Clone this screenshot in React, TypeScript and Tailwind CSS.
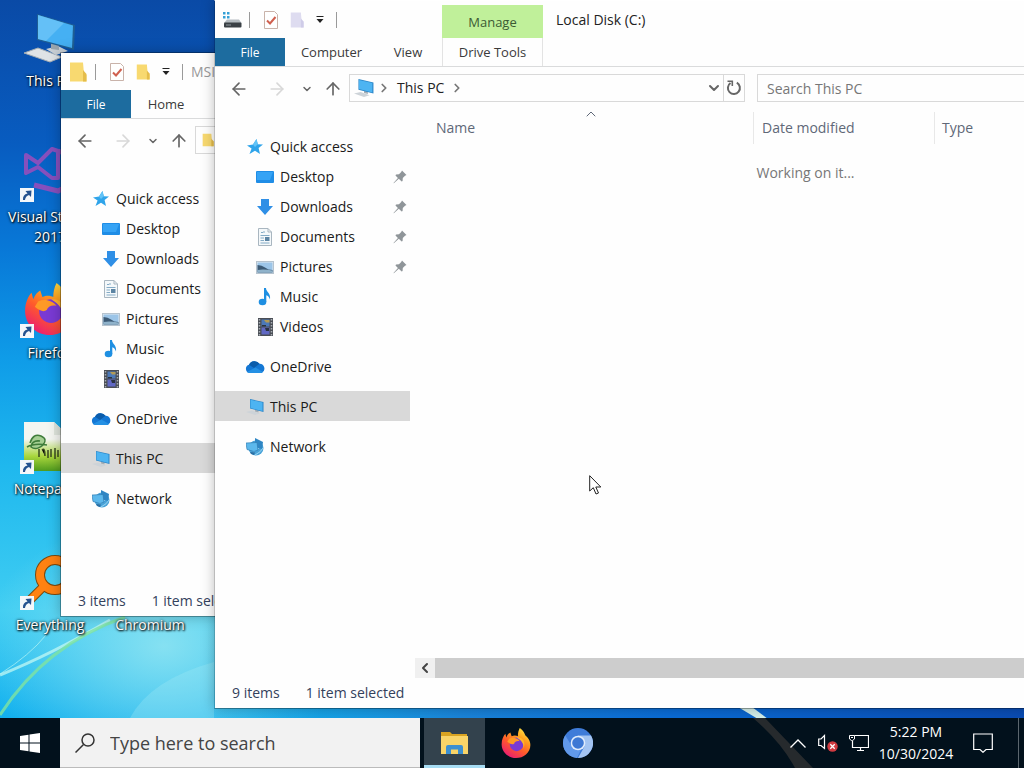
import type { ReactNode } from "react";
import { ArrowLeft, ArrowRight, ArrowUp, ChevronDown, ChevronLeft, ChevronRight, ChevronUp } from "lucide-react";

function ComputerIcon({ className }: { className?: string }) {
  return (
    <svg viewBox="0 0 52 50" className={className} aria-hidden="true">
      <path d="M0 40 L14 35 L38 44 L26 49 Z" fill="#dfe3e6" stroke="#a3acb3" strokeWidth="1" />
      <path d="M22 36 L34 33 L44 38 L32 42 Z" fill="#c9d0d6" />
      <path d="M27 28 L35 30 L35 37 L27 36 Z" fill="#9aa5ad" />
      <path d="M13 1 L51 12 L50 37 L13 27 Z" fill="#1f5f94" />
      <path d="M14 2 L49 12.500 L48 35 L14 26 Z" fill="#45b0f3" />
      <path d="M14 2 L40 10 L22 28 L14 26 Z" fill="#7accfa" opacity="0.600" />
    </svg>
  );
}

function SmallComputerIcon({ className }: { className?: string }) {
  return (
    <svg viewBox="0 0 18 16" className={className} aria-hidden="true">
      <path d="M0 13 L6 11.500 L14 14.500 L9 16 Z" fill="#cdd3d8" />
      <path d="M9 10 L12.500 11 V13.500 L9 12.500 Z" fill="#a5aeb5" />
      <path d="M4 0 L17.500 3 V13 L4 9.500 Z" fill="#2c86c8" />
      <path d="M4.500 0.800 L16.500 3.500 V12 L4.500 9 Z" fill="#4db4f2" />
    </svg>
  );
}

function StarIcon() {
  return (
    <svg viewBox="0 0 16 16" className="size-4" aria-hidden="true">
      <path d="M9.500 0 L10.800 5.200 L16 5.600 L11.600 9 L13 15 L8 11.800 L2.500 15 L4.600 9.400 L0 6.400 L6 5.600 Z" fill="#2fa4ea" />
      <path d="M9.500 0 L10.800 5.200 L8 8 L6 5.600 Z" fill="#62c3f7" />
    </svg>
  );
}

function DesktopIcon() {
  return (
    <svg viewBox="0 0 18 16" className="h-4 w-[18px]" aria-hidden="true">
      <rect x="0" y="2" width="18" height="12" rx="1" fill="#1f8de6" />
      <path d="M1 3 H17 L14 11 H1 Z" fill="#35a3f5" />
    </svg>
  );
}

function DownloadIcon() {
  return (
    <svg viewBox="0 0 18 16" className="h-4 w-[18px]" aria-hidden="true">
      <path d="M5 0 H13 V7 H17 L9 16 L1 7 H5 Z" fill="#2f8fe6" />
    </svg>
  );
}

function DocumentIcon() {
  return (
    <svg viewBox="0 0 18 18" className="size-[18px]" aria-hidden="true">
      <path d="M2.500 0.500 H12 L15.500 4 V17.500 H2.500 Z" fill="#f4f8fa" stroke="#a9b6c0" />
      <path d="M12 0.500 V4 H15.500" fill="none" stroke="#a9b6c0" />
      <path d="M5 4.500 H7 M8 3 V5 M4.500 7.500 H13.500 M4.500 10 H8 M4.500 12.500 H8 M4.500 15 H13.500" stroke="#84abc6" />
      <rect x="9" y="9" width="4.500" height="4" fill="#5c84a3" />
    </svg>
  );
}

function PictureIcon() {
  return (
    <svg viewBox="0 0 18 16" className="h-4 w-[18px]" aria-hidden="true">
      <rect x="0.500" y="2.500" width="17" height="12" fill="#e1e9f0" stroke="#b6c3ce" />
      <rect x="1.500" y="3.500" width="15" height="10" fill="#9cc5e8" />
      <path d="M1.500 6 Q6 6 9 8.500 T16.500 11 V13.500 H1.500 Z" fill="#3c5a75" />
      <path d="M1.500 11 Q8 10 16.500 11.500 V13.500 H1.500 Z" fill="#8fb2ca" />
    </svg>
  );
}

function MusicIcon() {
  return (
    <svg viewBox="0 0 18 18" className="size-[18px]" aria-hidden="true">
      <ellipse cx="6.500" cy="14" rx="3.800" ry="3.300" fill="#1e8fe2" />
      <path d="M8 0 H10 C10 4 15 5 14 11.500 C13 8.500 12 7.500 10.300 7.200 V14 H8 Z" fill="#1e8fe2" />
    </svg>
  );
}

function VideoIcon() {
  return (
    <svg viewBox="0 0 18 18" className="size-[18px]" aria-hidden="true">
      <rect x="2" y="0" width="15" height="18" fill="#4a4e55" />
      <path d="M3.500 1 V18 M15.500 1 V18" stroke="#a8adb4" strokeWidth="1.500" strokeDasharray="1.500 1.500" />
      <rect x="5.500" y="1.500" width="8" height="7" fill="#4c79b8" />
      <rect x="5.500" y="9.500" width="8" height="7" fill="#6068c4" />
      <path d="M8 2 H13.500 V4.500 H10 Z" fill="#b39b55" />
      <path d="M6 7 H10 V8.500 H6 Z M9 10 H13 V13 H10 Z" fill="#2a3240" />
    </svg>
  );
}

function CloudIcon() {
  return (
    <svg viewBox="0 0 20 14" className="h-[14px] w-5 shrink-0" aria-hidden="true">
      <path d="M4.500 13 A4.200 4.200 0 0 1 4 4.800 A6 6 0 0 1 14.500 3.800 A4.800 4.800 0 0 1 16.500 13 Z" fill="#1477d4" />
      <path d="M4 4.800 A6 6 0 0 1 14.500 3.800 L9 8 Z" fill="#0b5cab" />
      <path d="M2 12 L10.500 7.500 L18 12 Q17 13 16 13 H4.500 Q3 13 2 12 Z" fill="#2490e4" />
    </svg>
  );
}

function NetworkIcon() {
  return (
    <svg viewBox="0 0 18 18" className="size-[18px]" aria-hidden="true">
      <circle cx="10" cy="10" r="7.500" fill="#4aa3d8" />
      <path d="M7 14 Q12 12 16 7 M9 17 Q15 14 17 10" stroke="#9ad6f4" fill="none" />
      <path d="M9 0 L17 4 L16 11 L9 9 Z" fill="#2f86c4" />
      <path d="M0 5 L11 4.500 L12 12 L8 13.500 L1 11.500 Z" fill="#5cb8ec" stroke="#2f7db3" strokeWidth="0.700" />
      <path d="M4 14 L9 14.500 L8 17 L5 16 Z" fill="#2b6fa3" />
    </svg>
  );
}

function PinIcon() {
  return (
    <svg viewBox="0 0 14 14" className="size-[14px]" aria-hidden="true">
      <path d="M9 0.500 L13.500 5 L12 5.800 L9.800 8 L9.600 11 L8.600 11.500 L5.800 8.800 L0.800 13.200 L0.500 12.900 L4.900 8 L2.500 5.400 L3 4.400 L6 4.200 L8.200 2 Z" fill="#8f9599" />
    </svg>
  );
}

function FolderIcon({ className, faded }: { className?: string; faded?: boolean }) {
  return (
    <svg viewBox="0 0 18 20" className={className} aria-hidden="true">
      <path d="M1 0.500 H14 L15 12 L17.500 13 V19.500 H1 Z" fill={faded ? "#dedcf0" : "#f8d970"} />
      <path d="M14 8 L17.500 12 V19.500 H14 Z" fill={faded ? "#cfcce8" : "#e5bd4b"} />
    </svg>
  );
}

function DriveIcon() {
  return (
    <svg viewBox="0 0 20 18" className="h-[18px] w-5" aria-hidden="true">
      <path d="M1 1 H3.500 V3.500 H1 Z M5 1 H7.500 V3.500 H5 Z M1 5 H3.500 V7.500 H1 Z M5 5 H7.500 V7.500 H5 Z" fill="#35a0d6" />
      <path d="M5 8.500 H17 L19.500 12 H2 Z" fill="#b5bcc1" />
      <rect x="2" y="11.500" width="17.500" height="5" rx="1" fill="#3a4045" />
      <path d="M4 14 H9" stroke="#8d969c" />
    </svg>
  );
}

function ChecklistIcon() {
  return (
    <svg viewBox="0 0 14 18" className="h-[18px] w-[14px]" aria-hidden="true">
      <path d="M0.500 0.500 H10.500 L13.500 3.500 V17.500 H0.500 Z" fill="#fff" stroke="#c9b3aa" />
      <path d="M3 9.500 L6 12.500 L11.500 6" fill="none" stroke="#d0604f" strokeWidth="2" />
    </svg>
  );
}

function RefreshIcon() {
  return (
    <svg viewBox="0 0 16 16" className="size-4" aria-hidden="true">
      <path d="M4.500 3 A6 6 0 1 0 10.800 2.700" fill="none" stroke="#666" strokeWidth="2" />
      <path d="M1.500 1.200 H6.300 V6" fill="none" stroke="#666" strokeWidth="1.600" />
    </svg>
  );
}

function FirefoxIcon({ className, id }: { className?: string; id: string }) {
  return (
    <svg viewBox="0 0 48 48" className={className} aria-hidden="true">
      <defs>
        <linearGradient id={id} x1="0.850" y1="0" x2="0.200" y2="1">
          <stop offset="0" stopColor="#fff14a" />
          <stop offset="0.300" stopColor="#ffa21f" />
          <stop offset="0.600" stopColor="#ff5a2b" />
          <stop offset="1" stopColor="#e8157a" />
        </linearGradient>
      </defs>
      <path d="M30 0 C36 4 38 9 39 12 C42 14 47 20 47 27 C47 39 36 48 24 48 C11 48 1 38 1 26 C1 18 4 12 7 9 L8.500 15 C10 11 13 8 15 7 L17 13 C21 11 25 12 27 13 C27 8 28 4 30 0 Z" fill={`url(#${id})`} />
      <circle cx="25" cy="26" r="11" fill="#7a3ad4" />
      <path d="M13 17 C20 14 27 17 30 21 C25 20 22 22 21 25 C18 27 15 26 10 22 Z" fill="#ff9a26" />
      <path d="M25 15 C36 14 40 24 36 33 C37 25 33 20 25 15 Z" fill="#ffb52b" />
    </svg>
  );
}

function ChromiumIcon({ className }: { className?: string }) {
  return (
    <svg viewBox="0 0 30 30" className={className} aria-hidden="true">
      <circle cx="15" cy="15" r="15" fill="#3f7cd9" />
      <path d="M15 7.500 H28 A15 15 0 0 1 15 30 L21.500 18.500 Z" fill="#a3c4f2" />
      <path d="M2.200 7.200 L9 18.500 Q13 23 18 21.500 L14 30 A15 15 0 0 1 2.200 7.200 Z" fill="#6199ea" />
      <circle cx="15" cy="15" r="7.300" fill="#e2edfc" />
      <circle cx="15" cy="15" r="5.800" fill="#3d78d4" />
    </svg>
  );
}

function VisualStudioIcon() {
  return (
    <svg viewBox="0 0 52 52" className="size-[52px]" aria-hidden="true">
      <path d="M2 8 L14 16 L28 2 L34 4 V31 L28 31 L14 20 L2 26 Z" fill="none" stroke="#8650bd" strokeWidth="4" strokeLinejoin="round" />
      <path d="M10 38 L34 44 L46 38 V8 L34 4" fill="none" stroke="#8650bd" strokeWidth="5" />
    </svg>
  );
}

function NotepadIcon() {
  return (
    <svg viewBox="0 0 52 50" className="h-[50px] w-[52px]" aria-hidden="true">
      <defs>
        <linearGradient id="npp" x1="0" y1="0" x2="0" y2="1">
          <stop offset="0.350" stopColor="#f4f6f1" />
          <stop offset="0.700" stopColor="#a9d63c" />
          <stop offset="1" stopColor="#4f9a1e" />
        </linearGradient>
      </defs>
      <path d="M0 1 H30 L44 14 V50 H0 Z" fill="url(#npp)" />
      <path d="M30 1 V14 H44 Z" fill="#dfe5dc" />
      <path d="M7 21 Q10 13 17 15 Q23 19 19 25 Q12 30 7 26 Z" fill="#a5cf93" />
      <path d="M3 26 Q10 22 23 24 M6 22 Q9 12 17 15 Q24 18 19 24 Q12 30 7 26 Q8 19 16 20" fill="none" stroke="#3f7d3a" strokeWidth="1.500" />
      <path d="M15 28 V36 M18 29 Q21 26 21 35 M24 29 V37 M27 28 V36 M31 27 V38 M34 29 V36 M38 28 V37" stroke="#3a4a20" strokeWidth="1.500" />
    </svg>
  );
}

function EverythingIcon() {
  return (
    <svg viewBox="0 0 52 52" className="size-[52px]" aria-hidden="true">
      <circle cx="31" cy="20" r="15" fill="none" stroke="#7a4a10" strokeWidth="10" />
      <path d="M20 31 L6 45" stroke="#7a4a10" strokeWidth="9" />
      <circle cx="31" cy="20" r="15" fill="none" stroke="#ff8212" strokeWidth="8" />
      <path d="M21 30 L6 45" stroke="#ff8212" strokeWidth="7" />
    </svg>
  );
}

function Wallpaper() {
  return (
    <svg viewBox="0 0 1024 718" preserveAspectRatio="none" className="absolute inset-0 size-full" aria-hidden="true">
      <defs>
        <linearGradient id="sky" x1="0" y1="0" x2="0" y2="1">
          <stop offset="0" stopColor="#0a4aa6" />
          <stop offset="0.200" stopColor="#085cc0" />
          <stop offset="0.350" stopColor="#0879d8" />
          <stop offset="0.500" stopColor="#0f9ce8" />
          <stop offset="0.650" stopColor="#1fb8ee" />
          <stop offset="0.850" stopColor="#3fcdf2" />
          <stop offset="1" stopColor="#12b0ee" />
        </linearGradient>
        <radialGradient id="glow" cx="0.160" cy="0.900" r="0.180">
          <stop offset="0" stopColor="#8fe4f2" stopOpacity="0.900" />
          <stop offset="1" stopColor="#8fe4f2" stopOpacity="0" />
        </radialGradient>
        <linearGradient id="side" x1="0" y1="0" x2="1" y2="0">
          <stop offset="0.200" stopColor="#1a9be0" stopOpacity="0" />
          <stop offset="0.450" stopColor="#1a84da" />
          <stop offset="0.650" stopColor="#0a6cd6" />
          <stop offset="1" stopColor="#0a4cb4" />
        </linearGradient>
      </defs>
      <rect width="1024" height="718" fill="url(#sky)" />
      <rect width="1024" height="718" fill="url(#glow)" />
      <rect y="600" width="1024" height="118" fill="url(#side)" />
      <path d="M0 675 Q50 655 110 620" fill="none" stroke="#c9fbf4" strokeWidth="3" opacity="0.700" />
      <path d="M0 674 Q30 655 46 635" fill="none" stroke="#c9fbf4" strokeWidth="1" opacity="0.600" />
      <path d="M0 715 Q45 645 125 617" fill="none" stroke="#7fe3a0" strokeWidth="3" opacity="0.800" />
      <path d="M130 718 Q150 680 214 662 V718 Z" fill="#a6ecf6" opacity="0.300" />
      <path d="M738 707 H752 L768 719 H758 Z" fill="#d5f0ea" />
    </svg>
  );
}

function ShortcutArrow() {
  return (
    <svg viewBox="0 0 14 14" className="absolute bottom-[-3px] left-[-4px] size-[14px]" aria-hidden="true">
      <rect width="14" height="14" fill="#f4f7fa" />
      <path d="M3 12 Q2.500 6.500 7.500 5.500 L5.500 3 L11.500 2.500 L11 9 L9 7 Q5.500 8 5 12 Z" fill="#24528f" />
    </svg>
  );
}

function Shortcut({ label, icon, shortcut = true, className = "" }: { label: string; icon: ReactNode; shortcut?: boolean; className?: string }) {
  return (
    <button type="button" className={`flex w-[100px] flex-col items-center text-white ${className}`}>
      <span className="relative mb-2 flex h-[52px] w-[52px] items-end justify-center">
        {icon}
        {shortcut && <ShortcutArrow />}
      </span>
      <span className="px-1 text-sm leading-5 [text-shadow:1px_1px_2px_#000,0_0_3px_#000]">{label}</span>
    </button>
  );
}

const quickAccess = [
  { label: "Desktop", icon: <DesktopIcon />, pinned: true },
  { label: "Downloads", icon: <DownloadIcon />, pinned: true },
  { label: "Documents", icon: <DocumentIcon />, pinned: true },
  { label: "Pictures", icon: <PictureIcon />, pinned: true },
  { label: "Music", icon: <MusicIcon />, pinned: false },
  { label: "Videos", icon: <VideoIcon />, pinned: false },
];

function NavItem({ label, icon, nested, pinned, selected }: { label: string; icon: ReactNode; nested?: boolean; pinned?: boolean; selected?: boolean }) {
  return (
    <button
      type="button"
      className={`flex h-[30px] w-full items-center pt-0.5 pr-[3px] text-left ${nested ? "pl-[40px]" : "pl-[30px]"} ${selected ? "bg-[#d9d9d9]" : ""}`}
    >
      <span className="mr-[5px] flex w-5 shrink-0 items-center justify-center">{icon}</span>
      <span className="flex-1">{label}</span>
      {pinned && <PinIcon />}
    </button>
  );
}

function Sidebar() {
  return (
    <nav className="flex w-[195px] shrink-0 flex-col pt-[22px] text-[#1a1a1a]">
      <NavItem label="Quick access" icon={<StarIcon />} />
      {quickAccess.map((item) => (
        <NavItem key={item.label} nested {...item} />
      ))}
      <div className="mt-[10px] flex flex-col gap-[10px]">
        <NavItem label="OneDrive" icon={<CloudIcon />} />
        <NavItem label="This PC" icon={<SmallComputerIcon className="h-4 w-[18px]" />} selected />
        <NavItem label="Network" icon={<NetworkIcon />} />
      </div>
    </nav>
  );
}

function QuickToolbar({ icon, faded }: { icon: ReactNode; faded?: boolean }) {
  return (
    <div className="flex h-full items-center">
      <span className="flex w-[34px] items-center justify-center">{icon}</span>
      <span className="h-4 w-px bg-[#9a9a9a]" />
      <button type="button" aria-label="Properties" className="ml-[14px]">
        <ChecklistIcon />
      </button>
      <button type="button" aria-label="New folder" className="ml-3">
        <FolderIcon className="h-4 w-[14px]" faded={faded} />
      </button>
      <button type="button" aria-label="Customize toolbar" className="ml-3">
        <svg viewBox="0 0 8 8" className="size-2" aria-hidden="true">
          <path d="M0.500 0.500 H7.500" stroke="#222" />
          <path d="M0.500 3 H7.500 L4 7 Z" fill="#222" />
        </svg>
      </button>
      <span className="ml-3 h-4 w-px bg-[#9a9a9a]" />
    </div>
  );
}

function NavButtons() {
  return (
    <div className="flex shrink-0 items-center pt-0.5 pl-[14px] text-[#666]">
      <button type="button" aria-label="Back" className="w-5">
        <ArrowLeft size={20} strokeWidth={2} />
      </button>
      <button type="button" aria-label="Forward" className="ml-[18px] w-5 text-[#d8d8d8]">
        <ArrowRight size={20} strokeWidth={2} />
      </button>
      <button type="button" aria-label="Recent locations" className="ml-[14px] w-3">
        <ChevronDown size={12} strokeWidth={3} />
      </button>
      <button type="button" aria-label="Up" className="ml-[10px] w-5">
        <ArrowUp size={20} strokeWidth={2} />
      </button>
    </div>
  );
}

function Window({ className, toolbar, title, contextTab, tabs, address, children, status }: {
  className: string;
  toolbar: ReactNode;
  title: ReactNode;
  contextTab?: boolean;
  tabs: ReactNode;
  address: ReactNode;
  children?: ReactNode;
  status: string[];
}) {
  return (
    <section className={`absolute flex flex-col overflow-hidden border bg-[#fefefe] bg-clip-padding text-sm shadow-[0_0_12px_rgba(0,0,0,0.25)] ${className}`}>
      <header className="flex h-[37px] shrink-0 items-center">
        <div className={contextTab ? "h-full w-[227px]" : "h-full"}>{toolbar}</div>
        {contextTab && (
          <div className="flex h-[33px] w-[101px] items-center justify-center self-end bg-[#c0f09a] pt-0.5 text-[13px] text-[#3c5a34]">Manage</div>
        )}
        {title}
      </header>
      <div className="flex h-[29px] shrink-0 border-b border-[#dadbdc] text-[13px] text-[#3a3a3a]">
        <button type="button" className="w-[70px] bg-[#1d6c9f] pt-px text-xs text-white">File</button>
        {tabs}
      </div>
      <div className="flex h-[42px] shrink-0 items-center">
        <NavButtons />
        {address}
      </div>
      <div className="flex min-h-0 flex-1">
        <Sidebar />
        {children}
      </div>
      <footer className="flex h-[30px] shrink-0 items-center gap-[26px] pl-[17px] text-[#33415c]">
        {status.map((text) => (
          <span key={text}>{text}</span>
        ))}
      </footer>
    </section>
  );
}

function BackWindow() {
  return (
    <Window
      className="top-[52px] left-[60px] h-[565px] w-[640px] border-black/30"
      toolbar={<QuickToolbar icon={<FolderIcon className="h-5 w-[18px]" />} />}
      title={<h2 className="pl-2 text-[#999]">MSI</h2>}
      tabs={<button type="button" className="w-[70px]">Home</button>}
      address={
        <div className="mr-3 ml-1.5 flex h-7 flex-1 items-center border border-[#d9d9d9] pl-1.5">
          <FolderIcon className="h-4 w-3" />
        </div>
      }
      status={["3 items", "1 item selected"]}
    />
  );
}

function FrontWindow() {
  return (
    <Window
      className="top-0 right-[-173px] bottom-[9px] left-[214px] border-x-black/15 border-t-white border-b-black/30"
      toolbar={<QuickToolbar icon={<DriveIcon />} faded />}
      title={<h1 className="pl-[13px] text-[#222]">Local Disk (C:)</h1>}
      contextTab
      tabs={
        <>
          <button type="button" className="w-[93px]">Computer</button>
          <button type="button" className="w-[60px]">View</button>
          <button type="button" className="ml-1 w-[101px] border-x border-[#e3e3e3]">Drive Tools</button>
        </>
      }
      address={
        <>
          <div className="ml-1.5 flex h-7 flex-1 items-center border border-[#d9d9d9] text-[#222]">
            <SmallComputerIcon className="ml-1 h-[18px] w-5" />
            <ChevronRight size={14} strokeWidth={3} className="ml-[3px] text-[#777]" />
            <button type="button" className="mr-1.5 ml-1.5">This PC</button>
            <ChevronRight size={14} strokeWidth={3} className="text-[#777]" />
            <button type="button" aria-label="Previous locations" className="mr-px ml-auto text-[#666]">
              <ChevronDown size={16} strokeWidth={3} />
            </button>
            <button type="button" aria-label="Refresh" className="flex h-full w-[21px] items-center justify-center border-l border-[#d9d9d9]">
              <RefreshIcon />
            </button>
          </div>
          <input
            type="search"
            aria-label="Search This PC"
            placeholder="Search This PC"
            className="mr-3 ml-3 h-7 w-[427px] border border-[#d9d9d9] px-[9px] outline-none placeholder:text-[#777]"
          />
        </>
      }
      status={["9 items", "1 item selected"]}
    >
      <div className="ml-[5px] flex min-w-0 flex-1 flex-col">
        <table className="w-full table-fixed text-left text-[#5f6878]">
          <colgroup>
            <col className="w-[339px]" />
            <col className="w-[181px]" />
            <col />
          </colgroup>
          <thead>
            <tr className="h-[38px]">
              <th className="p-0 font-normal">
                <div className="relative flex h-8 items-center border-r border-[#e8e8e8] pl-[21px]">
                  Name
                  <ChevronUp size={16} strokeWidth={1.5} className="absolute top-[-6px] left-[168px]" />
                </div>
              </th>
              <th className="p-0 font-normal">
                <div className="flex h-8 items-center border-r border-[#e8e8e8] pl-2">Date modified</div>
              </th>
              <th className="p-0 font-normal">
                <div className="pl-[7px]">Type</div>
              </th>
            </tr>
          </thead>
          <tbody>
            <tr className="h-[52px]">
              <td colSpan={3} className="p-0 text-center text-[#777]">Working on it...</td>
            </tr>
          </tbody>
        </table>
        <div className="mt-auto flex h-5">
          <button type="button" aria-label="Scroll left" className="flex w-5 items-center justify-center bg-[#f0f0f0] text-[#444]">
            <ChevronLeft size={16} strokeWidth={3} />
          </button>
          <div className="flex-1 bg-[#cdcdcd]" />
        </div>
      </div>
    </Window>
  );
}

function Taskbar() {
  return (
    <footer className="relative flex h-[50px] shrink-0 items-stretch overflow-hidden bg-[#02111c] text-white">
      <button type="button" aria-label="Start" className="flex w-[60px] items-center justify-center">
        <svg viewBox="0 0 20 20" className="size-5" aria-hidden="true">
          <path d="M0 3 L8.500 1.800 V9.500 H0 Z M9.500 1.600 L20 0 V9.500 H9.500 Z M0 10.500 H8.500 V18.200 L0 17 Z M9.500 10.500 H20 V20 L9.500 18.400 Z" fill="#fff" />
        </svg>
      </button>
      <label className="flex w-[360px] items-center border-b border-[#bbb] bg-[#f2f2f2] pl-[15px] text-[#333]">
        <svg viewBox="0 0 20 20" className="size-5 shrink-0" aria-hidden="true">
          <circle cx="13" cy="7" r="6" fill="none" stroke="#333" strokeWidth="1.500" />
          <path d="M8.500 11.500 L0.500 19.500" stroke="#333" strokeWidth="1.500" />
        </svg>
        <input type="text" placeholder="Type here to search" aria-label="Type here to search" className="ml-[15px] min-w-0 flex-1 bg-transparent text-lg outline-none placeholder:text-[#444]" />
      </label>
      <button type="button" aria-label="File Explorer" className="ml-1 flex w-[61px] items-center justify-center border-b-[3px] border-[#a6dcf3] bg-[#33424d] pt-[3px]">
        <svg viewBox="0 0 28 24" className="h-6 w-7" aria-hidden="true">
          <path d="M0 1 H9 L11 3 H26 V7 H0 Z" fill="#d9a321" />
          <path d="M0 5 H27 V23 H0 Z" fill="#f9d468" />
          <path d="M5 23 V16 Q5 14 7 14 H20 Q22 14 22 16 V23 H17 V18.500 H10 V23 Z" fill="#3c8fd0" />
        </svg>
      </button>
      <button type="button" aria-label="Firefox" className="flex w-[62px] items-center justify-center">
        <FirefoxIcon className="size-[30px]" id="fxBar" />
      </button>
      <button type="button" aria-label="Chromium" className="flex w-[62px] items-center justify-center">
        <ChromiumIcon className="size-[30px]" />
      </button>
      <div className="relative ml-auto flex items-center pl-8">
        {/* light ray of the wallpaper showing through the bar */}
        <svg viewBox="0 0 60 50" className="absolute top-0 left-0 h-[50px] w-[60px]" aria-hidden="true">
          <path d="M0 0 H12 L60 50 H42 Q28 24 0 0 Z" fill="#262a2d" />
        </svg>
        <button type="button" aria-label="Show hidden icons" className="relative flex w-[26px] justify-center">
          <svg viewBox="0 0 16 9" className="h-[9px] w-4" aria-hidden="true">
            <path d="M0.500 8.500 L8 1 L15.500 8.500" fill="none" stroke="#fff" strokeWidth="1.300" />
          </svg>
        </button>
        <button type="button" aria-label="Volume muted" className="flex w-[34px] justify-center">
          <svg viewBox="0 0 20 18" className="h-[18px] w-5" aria-hidden="true">
            <path d="M0.700 5 H3 L6.500 1.500 V14.500 L3 11.500 H0.700 Z" fill="none" stroke="#fff" strokeWidth="1.200" />
            <circle cx="14.500" cy="12.500" r="5.200" fill="#cf3a40" />
            <path d="M12.300 10.300 L16.700 14.700 M16.700 10.300 L12.300 14.700" stroke="#fff" strokeWidth="1.300" />
          </svg>
        </button>
        <button type="button" aria-label="Network" className="flex w-7 justify-center">
          <svg viewBox="0 0 20 18" className="h-[18px] w-5" aria-hidden="true">
            <path d="M5.500 1.500 H19.500 V13.500 H3.500 V7 M11.500 13.500 V16.500 M8 16.500 H15" fill="none" stroke="#fff" strokeWidth="1.200" />
            <path d="M0.500 1.500 H5.500 V5 L3.500 6.500 H2.500 L0.500 5 Z M2 3.500 H4" fill="#02111c" stroke="#fff" />
          </svg>
        </button>
        <button type="button" className="w-[86px] text-center text-sm leading-[22px]">
          5:22 PM
          <br />
          10/30/2024
        </button>
        <button type="button" aria-label="Notifications" className="flex w-12 justify-center">
          <svg viewBox="0 0 20 20" className="size-5" aria-hidden="true">
            <path d="M0.700 1 H19.300 V16.500 H13 L10 19.300 L7 16.500 H0.700 Z" fill="none" stroke="#fff" strokeWidth="1.200" />
          </svg>
        </button>
      </div>
      <button type="button" aria-label="Show desktop" className="ml-[11px] w-1.5 border-l border-[#5b666e]" />
    </footer>
  );
}

export default function App() {
  return (
    <div className="flex h-screen flex-col overflow-hidden font-['Open_Sans','Noto_Sans',sans-serif] text-sm">
      <main className="relative min-h-0 flex-1 overflow-hidden">
        <Wallpaper />
        <div className="relative grid auto-rows-[136px] grid-cols-[repeat(2,100px)] pt-[11px]">
          <Shortcut label="This PC" icon={<ComputerIcon className="h-[50px] w-[52px]" />} shortcut={false} className="col-start-1" />
          <Shortcut label="Visual Studio 2017" icon={<VisualStudioIcon />} className="col-start-1" />
          <Shortcut label="Firefox" icon={<FirefoxIcon className="size-[52px]" id="fxDesk" />} className="col-start-1" />
          <Shortcut label="Notepad++" icon={<NotepadIcon />} className="col-start-1" />
          <Shortcut label="Everything" icon={<EverythingIcon />} className="col-start-1" />
          <Shortcut label="Chromium" icon={<ChromiumIcon className="size-[48px]" />} className="col-start-2" />
        </div>
        <BackWindow />
        <FrontWindow />
        <svg viewBox="0 0 13 20" className="pointer-events-none absolute top-[475px] left-[589px] h-5 w-[13px]" aria-hidden="true">
          <path d="M0.700 0.700 V16 L4.300 12.700 L7 19 L9.500 18 L6.800 12 H11.800 Z" fill="#fff" stroke="#222" />
        </svg>
      </main>
      <Taskbar />
    </div>
  );
}
